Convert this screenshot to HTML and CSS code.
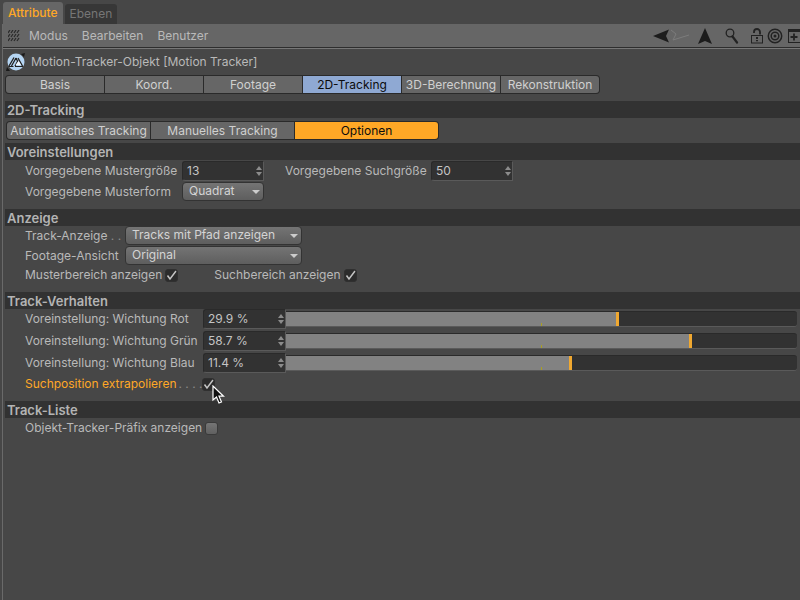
FILE: index.html
```html
<!DOCTYPE html>
<html lang="de">
<head>
  <meta charset="UTF-8" />
  <meta name="viewport" content="width=device-width, initial-scale=1.0"/>
  <title>Attribute</title>
  <link rel="stylesheet" href="styles.css">
</head>
<body>

<nav class="panel-tabs">
  <button class="panel-tab active">Attribute</button>
  <button class="panel-tab">Ebenen</button>
</nav>

<div class="panel">
  <header class="toolbar">
    <svg class="grip" width="12" height="12" viewBox="0 0 12 12" stroke="#2b2b2b" stroke-width="1.3">
      <path d="M0 3l2-3M3 3l2-3M6 3l2-3M9 3l2-3M0 7l2-3M3 7l2-3M6 7l2-3M9 7l2-3M0 11l2-3M3 11l2-3M6 11l2-3M9 11l2-3"/>
    </svg>
    <button class="menu">Modus</button>
    <button class="menu">Bearbeiten</button>
    <button class="menu">Benutzer</button>
    <div class="tools">
      <button class="tool back" aria-label="Zurück">
        <svg width="38" height="16" viewBox="0 0 38 16">
          <path d="M0 8L16 1.500L13 8L16 14.500Z" fill="#1c1c1c"/>
          <path d="M18 2l5 4-3 6 16-5" fill="none" stroke="#7c7c7c"/>
        </svg>
      </button>
      <button class="tool up" aria-label="Nach oben">
        <svg width="16" height="16" viewBox="0 0 16 16"><path d="M8 0L15 16L8 13L1 16Z" fill="#1c1c1c"/></svg>
      </button>
      <button class="tool search" aria-label="Suchen">
        <svg width="14" height="16" viewBox="0 0 14 16" fill="none" stroke="#222">
          <circle cx="5" cy="5" r="3.800" stroke-width="1.300"/>
          <path d="M7.500 8.500L12 14.500" stroke-width="2.200" stroke-linecap="round"/>
        </svg>
      </button>
      <button class="tool" aria-label="Sperren">
        <svg width="14" height="16" viewBox="0 0 14 16" fill="none" stroke="#222" stroke-width="1.400">
          <rect x="1.500" y="7.500" width="11" height="7.500" stroke-width="1"/>
          <path d="M10 6.500V4a3 3 0 0 0-6 0v1" stroke-width="1.800"/>
          <path d="M7 9v2M7 12v1.300" stroke-width="2"/>
        </svg>
      </button>
      <button class="tool" aria-label="Ziel">
        <svg width="16" height="16" viewBox="0 0 16 16" fill="none" stroke="#222" stroke-width="1.500">
          <circle cx="8" cy="8" r="6.700"/><circle cx="8" cy="8" r="3.800"/><circle cx="8" cy="8" r="1.500" fill="#222" stroke="none"/>
        </svg>
      </button>
      <button class="tool" aria-label="Neues Fenster">
        <svg width="13" height="16" viewBox="0 0 13 16" fill="none" stroke="#222">
          <rect x="1.500" y="1.500" width="12" height="13" stroke-width="1"/>
          <path d="M1 2.500h12" stroke-width="3"/>
          <path d="M3.500 9h7M7 5.500v7" stroke-width="1.800"/>
        </svg>
      </button>
    </div>
  </header>

  <main class="content">
    <div class="object-title">
      <svg width="20" height="20" viewBox="0 0 20 20">
        <path d="M15 2l4-1-1 4zM1 15l3 4-4 0z" fill="#191919"/>
        <circle cx="10" cy="10" r="8.500" fill="#b5d5f3"/>
        <path d="M3 14L8 5.500M5.500 14L10 6M10 6L11.500 9M12 6L16.500 14M9 14L12 8.500" fill="none" stroke="#222" stroke-width="1.300"/>
        <path d="M2.500 14.500h5M9 14.500h8" stroke="#222"/>
        <path d="M9.500 13l3-4 2.500 4z" fill="#f5f9fc"/>
      </svg>
      <span>Motion-Tracker-Objekt [Motion Tracker]</span>
    </div>

    <div class="tabs">
      <button>Basis</button>
      <button>Koord.</button>
      <button>Footage</button>
      <button class="selected">2D-Tracking</button>
      <button>3D-Berechnung</button>
      <button>Rekonstruktion</button>
    </div>

    <h2>2D-Tracking</h2>
    <div class="tabs subtabs">
      <button>Automatisches Tracking</button>
      <button>Manuelles Tracking</button>
      <button class="selected">Optionen</button>
    </div>

    <h2>Voreinstellungen</h2>
    <section class="defaults">
      <label for="pattern-size">Vorgegebene Mustergröße</label>
      <div class="number">
        <input type="text" id="pattern-size" value="13">
        <svg class="stepper" width="6" height="10" viewBox="0 0 6 10"><path d="M3 0L6 4H0zM3 10L0 6H6z"/></svg>
      </div>
      <label for="search-size">Vorgegebene Suchgröße</label>
      <div class="number">
        <input type="text" id="search-size" value="50">
        <svg class="stepper" width="6" height="10" viewBox="0 0 6 10"><path d="M3 0L6 4H0zM3 10L0 6H6z"/></svg>
      </div>
      <label for="pattern-shape">Vorgegebene Musterform</label>
      <select id="pattern-shape"><option>Quadrat</option></select>
    </section>

    <h2>Anzeige</h2>
    <section class="display">
      <div class="selects">
        <label for="track-display">Track-Anzeige <span class="dots">. .</span></label>
        <select id="track-display"><option>Tracks mit Pfad anzeigen</option></select>
        <label for="footage-view">Footage-Ansicht</label>
        <select id="footage-view"><option>Original</option></select>
      </div>
      <div class="checks">
        <div class="check"><label for="show-pattern">Musterbereich anzeigen</label><input type="checkbox" id="show-pattern" checked></div>
        <div class="check"><label for="show-search">Suchbereich anzeigen</label><input type="checkbox" id="show-search" checked></div>
      </div>
    </section>

    <h2>Track-Verhalten</h2>
    <section class="behaviour">
      <div class="weights">
        <label for="red">Voreinstellung: Wichtung Rot</label>
        <div class="number">
          <input type="text" id="red" value="29.9 %">
          <svg class="stepper" width="6" height="10" viewBox="0 0 6 10"><path d="M3 0L6 4H0zM3 10L0 6H6z"/></svg>
        </div>
        <input type="range" aria-label="Wichtung Rot" min="-100" max="100" step="0.1" value="29.9" style="--fill: 64.95%">

        <label for="green">Voreinstellung: Wichtung Grün</label>
        <div class="number">
          <input type="text" id="green" value="58.7 %">
          <svg class="stepper" width="6" height="10" viewBox="0 0 6 10"><path d="M3 0L6 4H0zM3 10L0 6H6z"/></svg>
        </div>
        <input type="range" aria-label="Wichtung Grün" min="-100" max="100" step="0.1" value="58.7" style="--fill: 79.35%">

        <label for="blue">Voreinstellung: Wichtung Blau</label>
        <div class="number">
          <input type="text" id="blue" value="11.4 %">
          <svg class="stepper" width="6" height="10" viewBox="0 0 6 10"><path d="M3 0L6 4H0zM3 10L0 6H6z"/></svg>
        </div>
        <input type="range" aria-label="Wichtung Blau" min="-100" max="100" step="0.1" value="11.4" style="--fill: 55.7%">
      </div>
      <div class="check extrapolate">
        <label for="extrapolate">Suchposition extrapolieren</label>
        <span class="dots">. . . .</span>
        <input type="checkbox" id="extrapolate" checked>
        <svg class="cursor" width="13" height="19" viewBox="0 0 13 19">
          <path d="M1 1V15L4.500 12L7 18L9.500 17L7 11.200H11.500Z" fill="#111" stroke="#fff" stroke-width="1.200"/>
        </svg>
      </div>
    </section>

    <h2>Track-Liste</h2>
    <section>
      <div class="check"><label for="prefix">Objekt-Tracker-Präfix anzeigen</label><input type="checkbox" id="prefix"></div>
    </section>
  </main>
</div>

</body>
</html>
```
FILE: styles.css
```css
* {
  box-sizing: border-box;
}
body {
  margin: 0;
  min-height: 100vh;
  display: flex;
  flex-direction: column;
  background: #474747;
  color: #b9b9b9;
  font-family: Inter, "Liberation Sans", sans-serif;
  font-size: 12px;
  line-height: 16px;
}
button, input, select {
  font: inherit;
  color: inherit;
  margin: 0;
}
button {
  border: none;
  background: none;
  padding: 0;
}
svg {
  display: block;
  flex: none;
}

/* top tabs and menu */
.panel-tabs {
  display: flex;
  align-items: flex-end;
  gap: 2px;
  height: 24px;
  padding-left: 3px;
}
.panel-tab {
  height: 20px;
  padding: 0 5px;
  background: #373737;
  color: #767676;
  border-radius: 3px 3px 0 0;
}
.panel-tab.active {
  height: 22px;
  background: #666;
  color: #ffa826;
  font-weight: 500;
}
.panel {
  flex: 1;
  margin-left: 2px;
  border-left: 1px solid #6a6a6a;
}
.toolbar {
  display: flex;
  align-items: center;
  height: 24px;
  padding-left: 5px;
  background: #666;
  border-bottom: 1px solid #2e2e2e;
  overflow: hidden;
}
.menu {
  margin-left: 14px;
}
.grip + .menu {
  margin-left: 9px;
}
.tools {
  display: flex;
  align-items: center;
  gap: 3px;
  margin-left: auto;
}
.tool.back {
  margin-right: 3px;
}
.tool.up {
  margin-right: 9px;
}
.tool.search {
  margin-right: 8px;
}
.tool:nth-last-child(2) {
  margin-right: 1px;
}

.content {
  padding-left: 2px;
  border-top: 1px solid #777;
}
.object-title {
  display: flex;
  align-items: center;
  gap: 5px;
  height: 26px;
  padding-left: 1px;
}

/* segmented tabs */
.tabs {
  display: grid;
  grid-template-columns: repeat(6, minmax(0, 98px));
  gap: 1px;
  width: fit-content;
  margin: 0 0 7px;
  padding: 1px;
  background: #2a2a2a;
  border-radius: 4px;
}
.tabs button {
  height: 17px;
  background: #666;
  color: #d0d0d0;
  white-space: nowrap;
}
.tabs button:first-child {
  border-radius: 3px 0 0 3px;
}
.tabs button:last-child {
  border-radius: 0 3px 3px 0;
}
.tabs .selected {
  background: #8fa9d3;
  color: #0c0c0c;
}
.subtabs {
  grid-template-columns: repeat(3, minmax(0, 143px));
  margin: 3px 0 3px 1px;
}
.subtabs .selected {
  background: #ffa826;
}

h2 {
  margin: 0;
  padding-left: 2px;
  height: 17px;
  background: #323232;
  color: #b4b4b4;
  font-size: 13px;
  font-weight: 600;
  line-height: 18px;
}
section {
  padding: 0 0 0 20px;
}
label {
  white-space: nowrap;
}

/* fields */
.number {
  display: flex;
  align-items: center;
  height: 20px;
  padding: 0 1px 0 4px;
  background: #323232;
  border: 1px solid #2a2a2a;
  border-right-color: #5a5a5a;
  border-bottom-color: #5a5a5a;
  border-radius: 3px 0 0 3px;
}
.number input {
  flex: 1;
  min-width: 0;
  padding: 0;
  background: none;
  border: none;
  color: #c4c4c4;
}
.stepper {
  fill: #8c8c8c;
}
select {
  appearance: none;
  height: 19px;
  padding: 0 20px 1px 6px;
  border: 1px solid #333;
  border-radius: 4px;
  color: #d4d4d4;
  line-height: 14px;
  background: url("data:image/svg+xml,%3Csvg xmlns='http://www.w3.org/2000/svg' width='8' height='4'%3E%3Cpath d='M0 0h8L4 4z' fill='%23ccc'/%3E%3C/svg%3E") no-repeat right 3px center,
    linear-gradient(#747474, #5e5e5e);
}
input[type="checkbox"] {
  appearance: none;
  width: 13px;
  height: 13px;
  border: 1px solid #3a3a3a;
  border-radius: 3px;
  background: linear-gradient(#757575, #606060);
}
input[type="checkbox"]:checked {
  border-color: #303030;
  background: #2c2c2c url("data:image/svg+xml,%3Csvg xmlns='http://www.w3.org/2000/svg' width='11' height='11'%3E%3Cpath d='M1.500 5.500L4 9L10 1' fill='none' stroke='%23c4c4c4' stroke-width='1.500'/%3E%3C/svg%3E") no-repeat center;
}
.check {
  display: flex;
  align-items: center;
  gap: 3px;
  height: 20px;
}
.dots {
  color: #8b8b8b;
}

.defaults {
  display: grid;
  grid-template-columns: 157px 82px 167px 82px;
  row-gap: 1px;
  align-items: center;
  padding-top: 1px;
  padding-bottom: 8px;
}
.defaults label:nth-of-type(2) {
  padding-left: 21px;
}

.selects {
  display: grid;
  grid-template-columns: 100px 177px;
  row-gap: 1px;
  align-items: center;
}
.display {
  padding-bottom: 7px;
}
.checks {
  display: flex;
  gap: 36px;
}

.weights {
  display: grid;
  grid-template-columns: 178px 83px 1fr;
  row-gap: 2px;
  align-items: center;
  padding-right: 3px;
}
.behaviour {
  padding-bottom: 7px;
}
input[type="range"] {
  appearance: none;
  width: 100%;
  height: 16px;
  border: 0 solid #2a2a2a;
  border-top-width: 1px;
  border-bottom: 1px solid #5a5a5a;
  border-radius: 0 3px 3px 0;
  background: linear-gradient(#aaa01e, #aaa01e) center bottom / 1px 3px no-repeat,
    linear-gradient(90deg, #828282 var(--fill), #323232 var(--fill));
}
input[type="range"]::-webkit-slider-thumb {
  appearance: none;
  width: 3px;
  height: 14px;
  background: #f0a830;
}

.extrapolate {
  position: relative;
  gap: 2px;
  width: fit-content;
  margin-top: 1px;
  color: #ffa826;
}
.extrapolate .dots {
  width: 22px;
  white-space: nowrap;
}
.cursor {
  position: absolute;
  left: 187px;
  top: 11px;
}
```
